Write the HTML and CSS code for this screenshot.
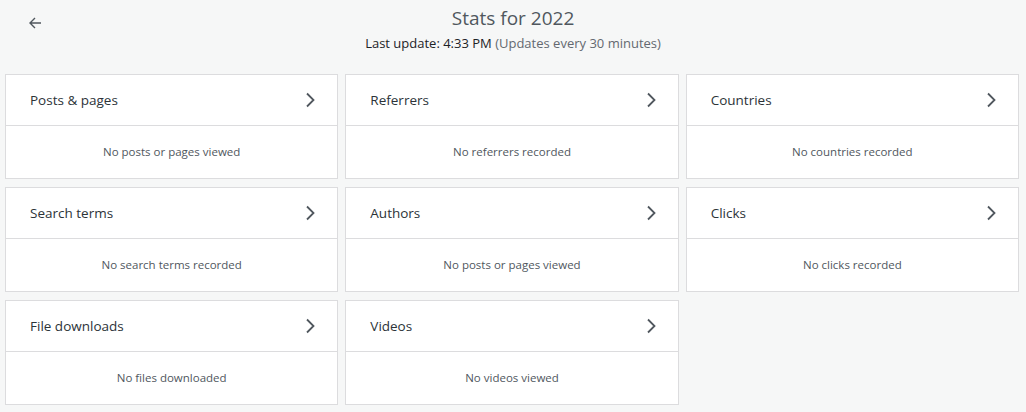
FILE: index.html
```html
<!DOCTYPE html>
<html lang="en">
<head>
  <meta charset="UTF-8" />
  <title>Stats for 2022</title>
  <link rel="stylesheet" href="styles.css">
</head>
<body>
  <div class="top-bar">
    <button class="back-btn" aria-label="Back">
      <svg width="16" height="16" viewBox="0 0 16 16"><path d="M14 8H3M8 3L3 8l5 5" fill="none" stroke="#50575e" stroke-width="1.4"/></svg>
    </button>
    <div class="heading">
      <h1>Stats for 2022</h1>
      <div class="updated">Last update: 4:33 PM <span>(Updates every 30 minutes)</span></div>
    </div>
  </div>

  <div class="stats-grid">
    <div class="card">
      <div class="card-head">Posts &amp; pages <svg class="chev" viewBox="0 0 10 16"><path d="M2 1.5l6.5 6.5L2 14.5"/></svg></div>
      <div class="card-body">No posts or pages viewed</div>
    </div>
    <div class="card">
      <div class="card-head">Referrers <svg class="chev" viewBox="0 0 10 16"><path d="M2 1.5l6.5 6.5L2 14.5"/></svg></div>
      <div class="card-body">No referrers recorded</div>
    </div>
    <div class="card">
      <div class="card-head">Countries <svg class="chev" viewBox="0 0 10 16"><path d="M2 1.5l6.5 6.5L2 14.5"/></svg></div>
      <div class="card-body">No countries recorded</div>
    </div>
    <div class="card">
      <div class="card-head">Search terms <svg class="chev" viewBox="0 0 10 16"><path d="M2 1.5l6.5 6.5L2 14.5"/></svg></div>
      <div class="card-body">No search terms recorded</div>
    </div>
    <div class="card">
      <div class="card-head">Authors <svg class="chev" viewBox="0 0 10 16"><path d="M2 1.5l6.5 6.5L2 14.5"/></svg></div>
      <div class="card-body">No posts or pages viewed</div>
    </div>
    <div class="card">
      <div class="card-head">Clicks <svg class="chev" viewBox="0 0 10 16"><path d="M2 1.5l6.5 6.5L2 14.5"/></svg></div>
      <div class="card-body">No clicks recorded</div>
    </div>
    <div class="card">
      <div class="card-head">File downloads <svg class="chev" viewBox="0 0 10 16"><path d="M2 1.5l6.5 6.5L2 14.5"/></svg></div>
      <div class="card-body">No files downloaded</div>
    </div>
    <div class="card">
      <div class="card-head">Videos <svg class="chev" viewBox="0 0 10 16"><path d="M2 1.5l6.5 6.5L2 14.5"/></svg></div>
      <div class="card-body">No videos viewed</div>
    </div>
  </div>
</body>
</html>
```

FILE: styles.css
```css
body {
  margin: 0;
  padding: 0;
  background: #f6f7f7;
  font-family: 'Open Sans', 'Noto Sans', sans-serif;
  color: #2c3338;
}

.top-bar {
  position: relative;
  height: 74px;
  text-align: center;
}

.back-btn {
  position: absolute;
  left: 27px;
  top: 15px;
  background: none;
  border: none;
  padding: 0;
  cursor: pointer;
}

.heading h1 {
  margin: 0;
  padding-top: 5px;
  font-size: 19px;
  font-weight: 400;
  line-height: 26px;
  color: #50575e;
}

.updated {
  font-size: 13px;
  line-height: 24px;
  color: #1d2327;
}
.updated span {
  color: #646970;
}

.stats-grid {
  display: grid;
  grid-template-columns: repeat(3, 1fr);
  gap: 8px 7px;
  padding: 0 7px 0 5px;
}

.card {
  background: #fff;
  border: 1px solid #dcdcde;
  height: 105px;
  box-sizing: border-box;
}

.card-head {
  display: flex;
  justify-content: space-between;
  align-items: center;
  height: 51px;
  padding: 0 22px 0 24px;
  box-sizing: border-box;
  border-bottom: 1px solid #dcdcde;
  font-size: 13.5px;
}

.chev {
  width: 10px;
  height: 16px;
  fill: none;
  stroke: #50575e;
  stroke-width: 1.8;
}

.card-body {
  height: 51px;
  display: flex;
  align-items: center;
  justify-content: center;
  font-size: 11.5px;
  color: #50575e;
}
```
